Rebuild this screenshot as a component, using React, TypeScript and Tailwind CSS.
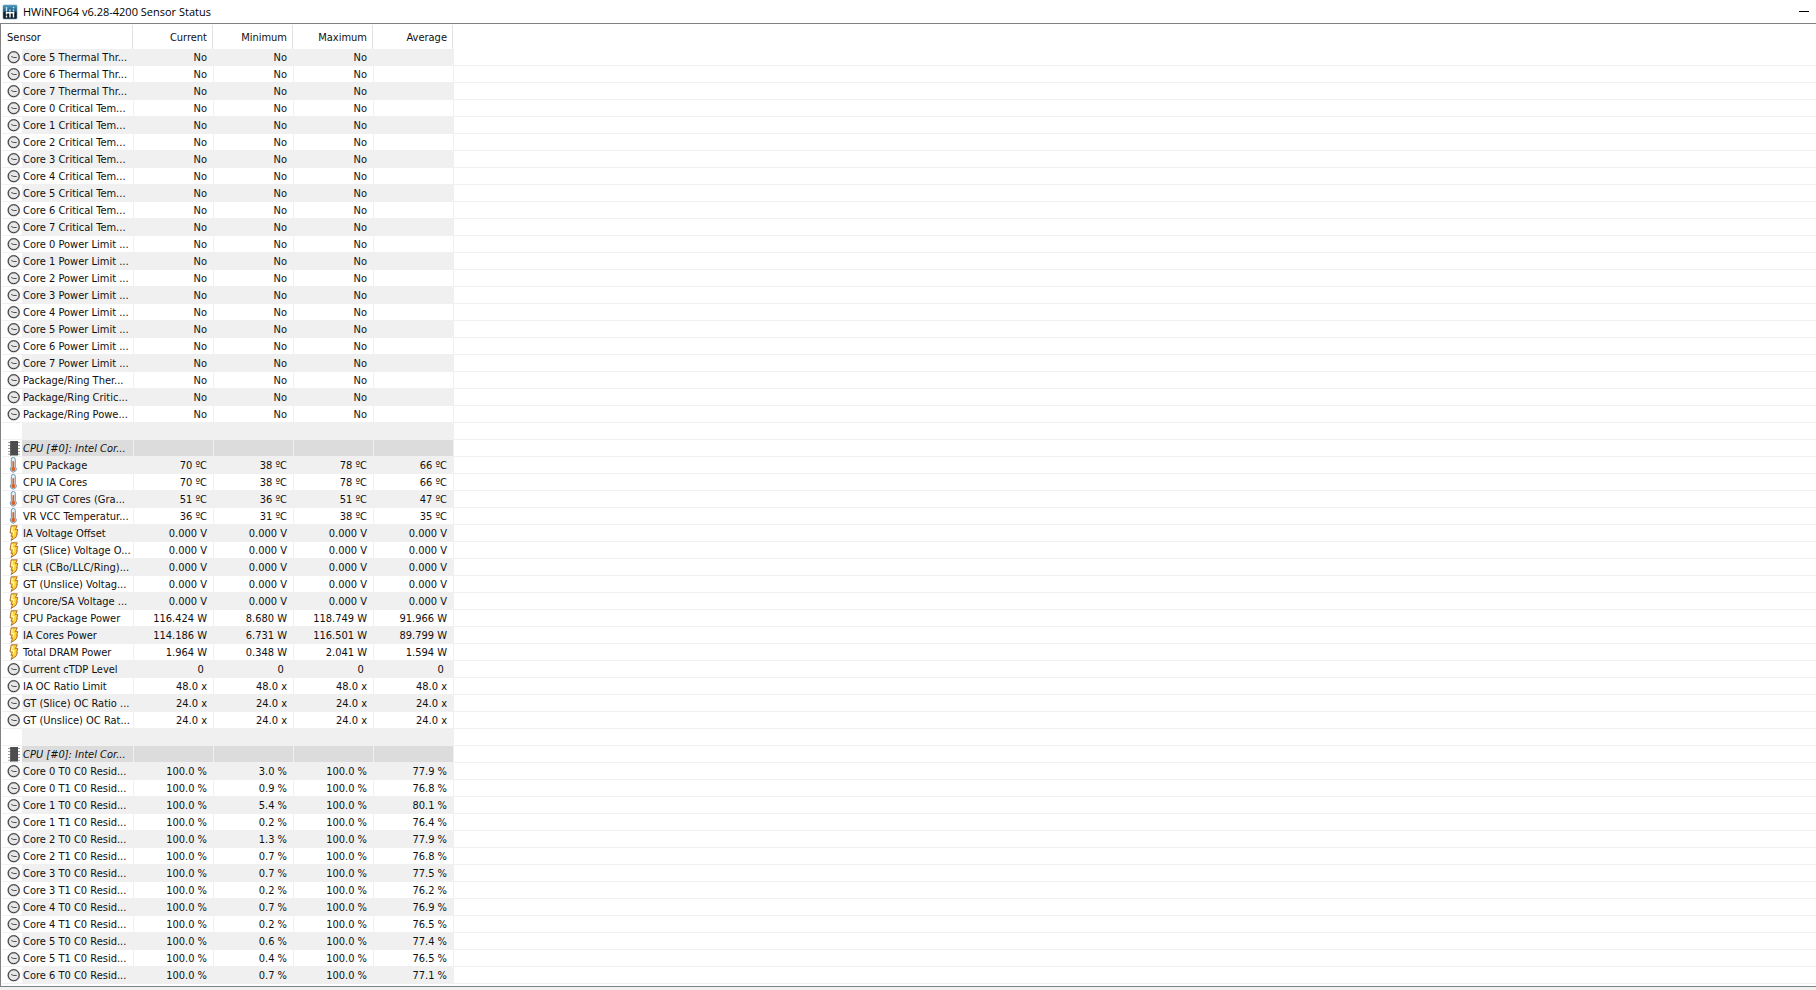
import { clsx } from "clsx";

type Kind = "clock" | "chip" | "temp" | "bolt" | "none";

type Row = {
  kind: Kind;
  name: string;
  values: string[];
};

const no = (name: string): Row => ({
  kind: "clock",
  name,
  values: ["No", "No", "No", ""],
});

const residency = (name: string, min: string, avg: string): Row => ({
  kind: "clock",
  name: `Core ${name} C0 Resid...`,
  values: ["100.0 %", min, "100.0 %", avg],
});

const same = (kind: Kind, name: string, value: string): Row => ({
  kind,
  name,
  values: [value, value, value, value],
});

const spacer: Row = { kind: "none", name: "", values: ["", "", "", ""] };

const group: Row = {
  kind: "chip",
  name: "CPU [#0]: Intel Cor...",
  values: ["", "", "", ""],
};

const rows: Row[] = [
  ...[5, 6, 7].map((n) => no(`Core ${n} Thermal Thr...`)),
  ...[0, 1, 2, 3, 4, 5, 6, 7].map((n) => no(`Core ${n} Critical Tem...`)),
  ...[0, 1, 2, 3, 4, 5, 6, 7].map((n) => no(`Core ${n} Power Limit ...`)),
  no("Package/Ring Ther..."),
  no("Package/Ring Critic..."),
  no("Package/Ring Powe..."),
  spacer,
  group,
  { kind: "temp", name: "CPU Package", values: ["70 ºC", "38 ºC", "78 ºC", "66 ºC"] },
  { kind: "temp", name: "CPU IA Cores", values: ["70 ºC", "38 ºC", "78 ºC", "66 ºC"] },
  { kind: "temp", name: "CPU GT Cores (Gra...", values: ["51 ºC", "36 ºC", "51 ºC", "47 ºC"] },
  { kind: "temp", name: "VR VCC Temperatur...", values: ["36 ºC", "31 ºC", "38 ºC", "35 ºC"] },
  same("bolt", "IA Voltage Offset", "0.000 V"),
  same("bolt", "GT (Slice) Voltage O...", "0.000 V"),
  same("bolt", "CLR (CBo/LLC/Ring)...", "0.000 V"),
  same("bolt", "GT (Unslice) Voltag...", "0.000 V"),
  same("bolt", "Uncore/SA Voltage ...", "0.000 V"),
  { kind: "bolt", name: "CPU Package Power", values: ["116.424 W", "8.680 W", "118.749 W", "91.966 W"] },
  { kind: "bolt", name: "IA Cores Power", values: ["114.186 W", "6.731 W", "116.501 W", "89.799 W"] },
  { kind: "bolt", name: "Total DRAM Power", values: ["1.964 W", "0.348 W", "2.041 W", "1.594 W"] },
  same("clock", "Current cTDP Level", "0 "),
  same("clock", "IA OC Ratio Limit", "48.0 x"),
  same("clock", "GT (Slice) OC Ratio ...", "24.0 x"),
  same("clock", "GT (Unslice) OC Rat...", "24.0 x"),
  spacer,
  group,
  residency("0 T0", "3.0 %", "77.9 %"),
  residency("0 T1", "0.9 %", "76.8 %"),
  residency("1 T0", "5.4 %", "80.1 %"),
  residency("1 T1", "0.2 %", "76.4 %"),
  residency("2 T0", "1.3 %", "77.9 %"),
  residency("2 T1", "0.7 %", "76.8 %"),
  residency("3 T0", "0.7 %", "77.5 %"),
  residency("3 T1", "0.2 %", "76.2 %"),
  residency("4 T0", "0.7 %", "76.9 %"),
  residency("4 T1", "0.2 %", "76.5 %"),
  residency("5 T0", "0.6 %", "77.4 %"),
  residency("5 T1", "0.4 %", "76.5 %"),
  residency("6 T0", "0.7 %", "77.1 %"),
];

const SensorIcon = ({ kind }: { kind: Kind }) => {
  if (kind === "clock") {
    return (
      <svg viewBox="0 0 16 16" className="block h-4 w-4">
        <circle cx="7.7" cy="8.2" r="5.5" fill="#e8e8e8" stroke="#b4b4b4" strokeWidth="1.8" />
        <circle cx="7.7" cy="8.2" r="5.5" fill="none" stroke="#3c3c3c" strokeWidth="1" />
        <path d="M5.2 7.5l2.5 1h3" fill="none" stroke="#4c4c4c" strokeWidth="1" />
      </svg>
    );
  }
  if (kind === "chip") {
    return (
      <svg viewBox="0 0 16 16" className="block h-4 w-4">
        <path
          d="M2 2.5h12M2 5.5h12M2 8.5h12M2 11.5h12M2 14.3h12"
          stroke="#9d9d9d"
          strokeWidth="1.1"
        />
        <rect x="4" y="1" width="8" height="14.5" fill="#4b4d4f" />
        <path d="M4.5 1v14.5" stroke="#606264" strokeWidth="1" />
      </svg>
    );
  }
  if (kind === "temp") {
    return (
      <svg viewBox="0 0 16 16" className="block h-4 w-4">
        <path
          d="M5.3 2.4a2 2 0 0 1 4 0v7.4a3 3 0 1 1-4 0z"
          fill="#e2f0f7"
          stroke="#6f97ab"
          strokeWidth="1"
        />
        <path d="M7.3 4.2v7" stroke="#d8642a" strokeWidth="1.8" />
        <circle cx="7.3" cy="12.1" r="2.1" fill="#d9622a" />
      </svg>
    );
  }
  if (kind === "bolt") {
    return (
      <svg viewBox="0 0 16 16" className="block h-4 w-4">
        <path
          d="M5.2.8h6.1L9.4 4.6h2.4L10.7 8.6h.7L10 12.2 5 15.5l1.7-4.2H4.9L6.4 8H4z"
          fill="#fbd932"
          stroke="#a8622c"
          strokeWidth="0.9"
          strokeLinejoin="round"
        />
        <path d="M6.4 2 5.6 6.6h2.2L7.2 9.6" fill="none" stroke="#fff6bb" strokeWidth="1.2" />
      </svg>
    );
  }
  return null;
};

const AppLogo = () => (
  <svg viewBox="0 0 16 16" className="h-4 w-4">
    <defs>
      <linearGradient id="logo" x1="0" y1="0" x2="0" y2="1">
        <stop offset="0" stopColor="#4b9cc4" />
        <stop offset="0.45" stopColor="#1f587a" />
        <stop offset="0.55" stopColor="#0b1822" />
        <stop offset="1" stopColor="#10222e" />
      </linearGradient>
    </defs>
    <rect x="1" y="1" width="14" height="14" rx="1" fill="url(#logo)" stroke="#6c9db3" strokeWidth="0.6" />
    <path d="M4.5 3v4.5M8 5.5v2M11.5 3v1.2M11.5 5.5v2" stroke="#c5e3f0" strokeWidth="1.4" />
    <path d="M3.8 8.8h8.6M4.5 8.8v1.6M4.5 11.5v2M8 8.8v4.7M11.5 8.8v4.7" stroke="#fff" strokeWidth="1.4" />
  </svg>
);

export default function App() {
  return (
    <div className="min-h-screen bg-[#f0f0f0] font-['DejaVu_Sans_Condensed','DejaVu_Sans',sans-serif] text-[11px] text-[#101010]">
      {/* Title bar */}
      <header className="flex h-[23px] items-center bg-white pr-[7px] pl-[2px]">
        <AppLogo />
        <h1 className="ml-[5px] flex-1 font-['Open_Sans',sans-serif] text-[11px] leading-4 text-black">
          HWiNFO64 v6.28-4200 Sensor Status
        </h1>
        <button aria-label="Minimize" className="flex h-4 w-[10px] items-center">
          <span className="h-px w-full bg-black" />
        </button>
      </header>

      {/* Sensor list */}
      <main className="border-y border-l border-[#828282] bg-white pb-[2px] pl-px">
        <table className="w-full table-fixed border-separate border-spacing-0">
          <colgroup>
            <col className="w-[20px]" />
            <col className="w-[112px]" />
            <col className="w-[80px]" />
            <col className="w-[80px]" />
            <col className="w-[80px]" />
            <col className="w-[80px]" />
            <col />
          </colgroup>
          <thead>
            <tr className="h-[25px]">
              <th colSpan={2} className="p-0 pt-px pr-px text-left font-normal">
                <div className="h-6 border-r border-[#e2e2e2] pt-[2px] pl-[5px] leading-[22px]">Sensor</div>
              </th>
              {["Current", "Minimum", "Maximum", "Average"].map((title) => (
                <th key={title} className="p-0 pt-px pr-px text-right font-normal">
                  <div className="h-6 border-r border-[#e2e2e2] pt-[2px] pr-[5px] leading-[22px]">{title}</div>
                </th>
              ))}
              <td />
            </tr>
          </thead>
          <tbody>
            {rows.map((row, i) => {
              const stripe = i % 2 === 0 ? "bg-[#f0f0f0]" : "bg-white";
              const cell = clsx(
                "h-[17px] border-r border-b border-[#f0f0f0] p-0 pt-[2px] leading-[14px] whitespace-pre",
                row.kind === "chip" ? "bg-[#dcdcdc]" : stripe,
              );
              return (
                <tr key={i}>
                  <td className="h-[17px] border-b border-[#f0f0f0] p-0 pl-[4px]">
                    <SensorIcon kind={row.kind} />
                  </td>
                  <td className={clsx(cell, "pl-px", row.kind === "chip" && "italic")}>
                    {row.name}
                  </td>
                  {row.values.map((value, n) => (
                    <td key={n} className={clsx(cell, "pr-[6px] text-right")}>
                      {value}
                    </td>
                  ))}
                  <td className="border-b border-[#f0f0f0] p-0" />
                </tr>
              );
            })}
          </tbody>
        </table>
      </main>
    </div>
  );
}
